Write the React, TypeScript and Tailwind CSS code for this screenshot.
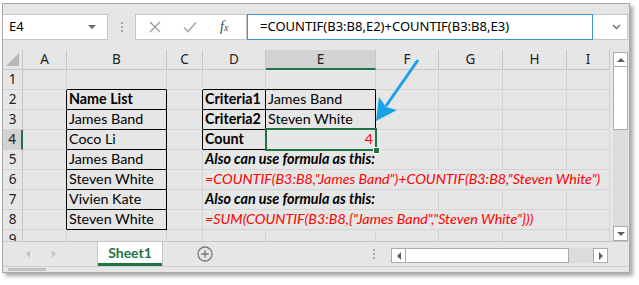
import React from 'react'

type CellData = { text: string; bold?: boolean; italic?: boolean; red?: boolean; right?: boolean }

const COLS = ['A', 'B', 'C', 'D', 'E', 'F', 'G', 'H', 'I']
const ROWS = [1, 2, 3, 4, 5, 6, 7, 8, 9]

const cells: Record<string, CellData> = {
  B2: { text: 'Name List', bold: true },
  B3: { text: 'James Band' },
  B4: { text: 'Coco Li' },
  B5: { text: 'James Band' },
  B6: { text: 'Steven White' },
  B7: { text: 'Vivien Kate' },
  B8: { text: 'Steven White' },
  D2: { text: 'Criteria1', bold: true },
  D3: { text: 'Criteria2', bold: true },
  D4: { text: 'Count', bold: true },
  E2: { text: 'James Band' },
  E3: { text: 'Steven White' },
  E4: { text: '4', red: true, right: true },
  D5: { text: 'Also can use formula as this:', bold: true, italic: true },
  D6: { text: '=COUNTIF(B3:B8,"James Band")+COUNTIF(B3:B8,"Steven White")', italic: true, red: true },
  D7: { text: 'Also can use formula as this:', bold: true, italic: true },
  D8: { text: '=SUM(COUNTIF(B3:B8,{"James Band","Steven White"}))', italic: true, red: true },
}

// columns whose right gridline is covered by overflowing text
const spill: Record<number, string[]> = {
  5: ['D', 'E'],
  6: ['D', 'E', 'F', 'G', 'H'],
  7: ['D', 'E'],
  8: ['D', 'E', 'F', 'G'],
}

const boxed = (r: number, c: string) =>
  (c === 'B' && r >= 2 && r <= 8) || ((c === 'D' || c === 'E') && r >= 2 && r <= 4)

const next = (c: string) => COLS[COLS.indexOf(c) + 1] ?? ''

function Cell({ r, c }: { r: number; c: string }) {
  const d = cells[`${c}${r}`]
  const rightBlack = boxed(r, c) || boxed(r, next(c))
  const bottomBlack = boxed(r, c) || boxed(r + 1, c)
  const hidden = (spill[r] ?? []).includes(c)
  const selected = c === 'E' && r === 4
  return (
    <div
      className={[
        'relative h-[20px] border-r border-b flex items-end pb-[1px] px-[2px] whitespace-nowrap',
        rightBlack ? 'border-r-black' : hidden ? 'border-r-transparent' : 'border-r-[#d4d4d4]',
        bottomBlack ? 'border-b-black' : 'border-b-[#d4d4d4]',
        d?.right ? 'justify-end' : 'justify-start',
      ].join(' ')}
    >
      {d && (
        <span
          className={[
            'leading-[18px] text-[14.3px] relative z-10',
            d.bold ? 'font-bold' : 'font-normal',
            d.italic ? 'italic' : 'not-italic',
            d.red ? 'text-[#ff0000]' : 'text-black',
          ].join(' ')}
        >
          {d.text}
        </span>
      )}
      {selected && (
        <>
          <div className="absolute -left-px -top-[2px] -right-[2px] -bottom-[2px] border-2 border-[#217346] z-20" />
          <div className="absolute -right-[5px] -bottom-[5px] w-[7px] h-[7px] bg-[#217346] border border-white z-30" />
        </>
      )}
    </div>
  )
}

function Sheet() {
  return (
    <div className="h-[191px] w-[607px] overflow-hidden font-[Lato,sans-serif]">
      <div className="grid grid-cols-[20px_44px_100px_36px_63px_110px_63px_64px_64px_43px]">
        <div className="relative h-[20px] bg-[#e6e6e6] border-r border-b border-[#c6c6c6]">
          <div className="absolute right-[3px] bottom-[3px] w-0 h-0 border-l-[13px] border-l-transparent border-b-[13px] border-b-[#b8b8b8]" />
        </div>
        {COLS.map((c) => (
          <div
            key={c}
            className={[
              'h-[20px] flex items-center justify-center border-r border-r-[#c6c6c6] text-[13.5px] font-["Noto_Sans",sans-serif]',
              c === 'E'
                ? 'bg-[#d2d2d2] border-b-2 border-b-[#217346] text-[#222]'
                : 'bg-[#e6e6e6] border-b border-b-[#c6c6c6] text-[#222]',
            ].join(' ')}
          >
            {c}
          </div>
        ))}
        {ROWS.map((r) => (
          <React.Fragment key={r}>
            <div
              className={[
                'h-[20px] flex items-center justify-center border-b border-b-[#d4d4d4] text-[13.5px] text-[#222] font-["Noto_Sans",sans-serif]',
                r === 4 ? 'bg-[#d2d2d2] border-r-2 border-r-[#217346]' : 'bg-[#e6e6e6] border-r border-r-[#c6c6c6]',
              ].join(' ')}
            >
              {r}
            </div>
            {COLS.map((c) => (
              <Cell key={c} r={r} c={c} />
            ))}
          </React.Fragment>
        ))}
      </div>
    </div>
  )
}

function VScroll() {
  return (
    <div className="w-[19px] h-[191px] bg-[#e6e6e6] flex flex-col items-end pt-[2px] pr-[1px]">
      <div className="w-[15px] h-[15px] bg-white border border-[#ababab] flex items-center justify-center">
        <div className="w-0 h-0 border-l-[4px] border-r-[4px] border-b-[4px] border-l-transparent border-r-transparent border-b-[#606060]" />
      </div>
      <div className="w-[15px] h-[63px] bg-white border border-t-0 border-[#ababab]" />
      <div className="flex-1 w-[15px] bg-[#dcdcdc]" />
      <div className="w-[15px] h-[15px] bg-white border border-[#ababab] flex items-center justify-center">
        <div className="w-0 h-0 border-l-[4px] border-r-[4px] border-t-[4px] border-l-transparent border-r-transparent border-t-[#606060]" />
      </div>
    </div>
  )
}

function Dots() {
  return (
    <div className="flex flex-col gap-[2px]">
      <div className="w-[2px] h-[2px] bg-[#a8a8a8]" />
      <div className="w-[2px] h-[2px] bg-[#a8a8a8]" />
      <div className="w-[2px] h-[2px] bg-[#a8a8a8]" />
    </div>
  )
}

function FormulaBar() {
  return (
    <div className="flex h-[26px] items-stretch font-['Noto_Sans',sans-serif] text-[13px]">
      <div className="w-[105px] bg-white border border-l-0 border-[#c6c6c6] flex items-center justify-between pl-[6px] pr-[11px] text-black">
        <span>E4</span>
        <div className="w-0 h-0 border-l-[4px] border-r-[4px] border-t-[4px] border-l-transparent border-r-transparent border-t-[#6a6a6a]" />
      </div>
      <div className="w-[27px] flex items-center justify-center">
        <Dots />
      </div>
      <div className="w-[112px] bg-white border border-[#c6c6c6] flex items-center pl-[13px] gap-[22px]">
        <svg width="12" height="12" viewBox="0 0 12 12">
          <path d="M1 1 L11 11 M11 1 L1 11" stroke="#9c9c9c" strokeWidth="1.4" fill="none" />
        </svg>
        <svg width="14" height="12" viewBox="0 0 14 12">
          <path d="M1 6.5 L5 10.5 L13 1.5" stroke="#a8a8a8" strokeWidth="1.6" fill="none" />
        </svg>
        <span className="font-['Liberation_Serif',serif] italic text-[14px] text-[#444] leading-none ml-[1px]">
          f<span className="text-[10px]">x</span>
        </span>
      </div>
      <div className="w-[346px] bg-white border border-[#3f93db] flex items-center pl-[12px] text-black whitespace-nowrap">
        =COUNTIF(B3:B8,E2)+COUNTIF(B3:B8,E3)
      </div>
      <div className="w-[35px] bg-white border border-l-0 border-[#c6c6c6] flex items-center justify-end pr-[6px]">
        <svg width="9" height="6" viewBox="0 0 9 6">
          <path d="M1 1 L4.5 4.5 L8 1" stroke="#707070" strokeWidth="1.5" fill="none" />
        </svg>
      </div>
    </div>
  )
}

function TabBar() {
  return (
    <div className="h-[25px] border-t border-[#c6c6c6] flex items-stretch">
      <div className="w-[94px] flex items-center pl-[23px] gap-[22px]">
        <div className="w-0 h-0 border-t-[4px] border-b-[4px] border-r-[4px] border-t-transparent border-b-transparent border-r-[#c4c4c4]" />
        <div className="w-0 h-0 border-t-[4px] border-b-[4px] border-l-[4px] border-t-transparent border-b-transparent border-l-[#c4c4c4]" />
      </div>
      <div className="w-[66px] h-[24px] bg-white border-x border-[#c6c6c6] flex flex-col">
        <div className="flex-1 flex items-center justify-center font-[Lato,sans-serif] font-bold text-[14px] text-[#217346]">
          Sheet1
        </div>
        <div className="h-[3px] bg-[#217346]" />
      </div>
      <div className="w-[84px] flex items-center justify-center">
        <svg width="16" height="16" viewBox="0 0 16 16">
          <circle cx="8" cy="8" r="7" stroke="#7a7a7a" strokeWidth="1.3" fill="none" />
          <path d="M8 4.2 V11.8 M4.2 8 H11.8" stroke="#7a7a7a" strokeWidth="1.3" />
        </svg>
      </div>
      <div className="w-[130px] flex items-center justify-end pr-[2px]">
        <Dots />
      </div>
      <div className="ml-[14px] mt-[6px] h-[15px] flex">
        <div className="w-[15px] bg-white border border-[#ababab] flex items-center justify-center">
          <div className="w-0 h-0 border-t-[4px] border-b-[4px] border-r-[4px] border-t-transparent border-b-transparent border-r-[#606060]" />
        </div>
        <div className="w-[163px] bg-white border border-l-0 border-[#ababab]" />
        <div className="w-[24px] bg-[#dcdcdc]" />
        <div className="w-[15px] bg-white border border-[#ababab] flex items-center justify-center">
          <div className="w-0 h-0 border-t-[4px] border-b-[4px] border-l-[4px] border-t-transparent border-b-transparent border-l-[#606060]" />
        </div>
      </div>
    </div>
  )
}

export default function App() {
  return (
    <div className="relative w-[639px] h-[285px] bg-white overflow-hidden">
      <div className="ml-[2px] mt-[3px] w-[628px] h-[270px] bg-[#e6e6e6] border border-[#a9a9a9] shadow-[3px_3px_4px_rgba(0,0,0,0.35)] flex flex-col">
        <div className="pt-[10px]">
          <FormulaBar />
        </div>
        <div className="mt-[10px] flex">
          <Sheet />
          <VScroll />
        </div>
        <TabBar />
        <div className="flex-1 border-t border-[#cfcfcf] relative">
          <div className="absolute left-[5px] top-[1px] w-[38px] h-[3px] bg-[#c2c2c2]" />
        </div>
      </div>
      <svg className="absolute left-0 top-0 pointer-events-none" width="639" height="285">
        <line x1="418" y1="60" x2="386" y2="106" stroke="#16a2e6" strokeWidth="3" />
        <polygon points="376,121 379,97 386,107 397,110" fill="#16a2e6" />
      </svg>
    </div>
  )
}
